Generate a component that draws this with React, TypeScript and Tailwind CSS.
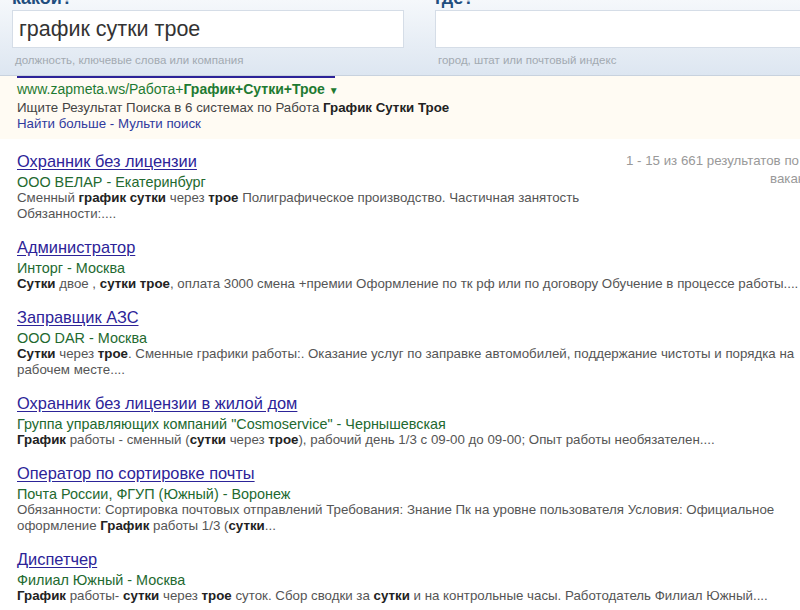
import type { ReactNode } from "react";

type Result = {
  title: string;
  company: string;
  text: ReactNode;
};

function B({ children }: { children: ReactNode }) {
  return <b className="font-bold text-[#222]">{children}</b>;
}

const results: Result[] = [
  {
    title: "Охранник без лицензии",
    company: "ООО ВЕЛАР - Екатеринбург",
    text: (
      <>
        Сменный <B>график сутки</B> через <B>трое</B> Полиграфическое производство. Частичная
        занятость Обязанности:....
      </>
    ),
  },
  {
    title: "Администратор",
    company: "Инторг - Москва",
    text: (
      <>
        <B>Сутки</B> двое , <B>сутки трое</B>, оплата 3000 смена +премии Оформление по тк рф или по
        договору Обучение в процессе работы....
      </>
    ),
  },
  {
    title: "Заправщик АЗС",
    company: "ООО DAR - Москва",
    text: (
      <>
        <B>Сутки</B> через <B>трое</B>. Сменные графики работы:. Оказание услуг по заправке
        автомобилей, поддержание чистоты и порядка на рабочем месте....
      </>
    ),
  },
  {
    title: "Охранник без лицензии в жилой дом",
    company: 'Группа управляющих компаний "Cosmoservice" - Чернышевская',
    text: (
      <>
        <B>График</B> работы - сменный (<B>сутки</B> через <B>трое</B>), рабочий день 1/3 с 09-00 до
        09-00; Опыт работы необязателен....
      </>
    ),
  },
  {
    title: "Оператор по сортировке почты",
    company: "Почта России, ФГУП (Южный) - Воронеж",
    text: (
      <>
        Обязанности: Сортировка почтовых отправлений Требования: Знание Пк на уровне пользователя
        Условия: Официальное оформление <B>График</B> работы 1/3 (<B>сутки</B>...
      </>
    ),
  },
  {
    title: "Диспетчер",
    company: "Филиал Южный - Москва",
    text: (
      <>
        <B>График</B> работы- <B>сутки</B> через <B>трое</B> суток. Сбор сводки за <B>сутки</B> и на
        контрольные часы. Работодатель Филиал Южный....
      </>
    ),
  },
];

function SearchField({
  label,
  value,
  hint,
  width,
}: {
  label: string;
  value?: string;
  hint: string;
  width: string;
}) {
  return (
    <div className={width + " shrink-0"}>
      <div className="-mt-[11px] h-[18px] text-[18px] font-bold leading-[18px] text-[#1f4e7e]">
        {label}
      </div>
      <div className="mt-[3px] flex h-[38px] items-center border border-[#d5dde7] bg-white pl-[6px] text-[21.5px] text-[#333]">
        {value}
      </div>
      <div className="mt-[5px] pl-[3px] text-[11.5px] leading-[14px] text-[#a2a9b1]">{hint}</div>
    </div>
  );
}

export default function App() {
  return (
    <div className="h-[610px] w-[800px] overflow-hidden bg-white font-['Liberation_Sans',Arial,sans-serif]">
      <header className="flex h-[76px] gap-[31px] overflow-hidden border-b border-[#c8d2de] bg-gradient-to-b from-[#f5f8fb] to-[#dde6f1] pl-[12px]">
        <SearchField
          label="какой?"
          value="график сутки трое"
          hint="должность, ключевые слова или компания"
          width="w-[392px]"
        />
        <SearchField label="где?" hint="город, штат или почтовый индекс" width="w-[380px]" />
      </header>

      <section className="bg-[#fffbf3] pb-[7px] pl-[17px] text-[13.3px] leading-[16px]">
        <div className="h-[2px] w-[318px] bg-[#2c2398]" />
        <div className="mt-[2px] text-[14px] leading-[18px] text-[#1e7a31]">
          www.zapmeta.ws/Работа+<b className="font-bold">График+Сутки+Трое</b>{" "}
          <span className="text-[10px]">▼</span>
        </div>
        <div className="text-[#444]">
          Ищите Результат Поиска в 6 системах по Работа <B>График Сутки Трое</B>
        </div>
        <div className="text-[#2f3a9e]">
          <a>Найти больше</a> - <a>Мульти поиск</a>
        </div>
      </section>

      <main className="pt-[12px] pl-[17px]">
        <div className="float-right -mr-[26px] mb-[10px] w-[200px] pt-[1px] text-[13.3px] leading-[18px] text-[#999]">
          <div className="whitespace-nowrap">1 - 15 из 661 результатов по</div>
          <div className="whitespace-nowrap pl-[144px]">вакансиям</div>
        </div>
        <div className="space-y-[15px]">
          {results.map((r) => (
            <div key={r.title}>
              <a className="block text-[16.4px] leading-[20px] text-[#2c2398] underline underline-offset-[2px]">
                {r.title}
              </a>
              <div className="mt-[3px] text-[14.4px] leading-[16px] text-[#23692f]">{r.company}</div>
              <div className="text-[13.3px] leading-[16px] text-[#555]">{r.text}</div>
            </div>
          ))}
        </div>
      </main>
    </div>
  );
}
